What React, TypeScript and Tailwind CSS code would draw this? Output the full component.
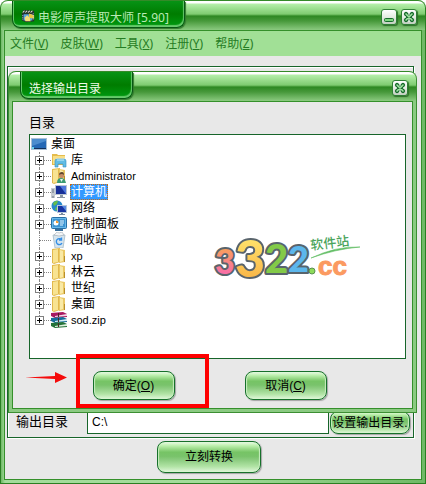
import type { ReactNode } from "react";

const cjk = "font-['Liberation_Sans','Noto_Sans_CJK_SC',sans-serif]";
const ui = "font-['Noto_Sans','Noto_Sans_CJK_SC',sans-serif]";

function CaptionButton({ kind, label }: { kind: "min" | "close"; label: string }) {
  return (
    <button
      type="button"
      aria-label={label}
      className="flex size-4 items-center justify-center rounded-[3px] border border-[#2f7f35] bg-linear-to-b from-white via-[#e4ece2] to-[#c3cfc0] shadow-[1px_1px_1px_#30702a]"
    >
      <svg viewBox="0 0 12 12" className="size-3 shrink-0" fill="none" stroke="#176b2c">
        {kind === "min" ? (
          <rect x="1.5" y="7.5" width="9" height="3" rx="1" fill="#7fd67f" />
        ) : (
          <>
            <path d="M3 3l6 6M9 3L3 9" strokeWidth="4.2" strokeLinecap="round" />
            <path d="M3 3l6 6M9 3L3 9" stroke="#a2e3a3" strokeWidth="1.6" strokeLinecap="round" />
            <path d="M6 1v3M6 8v3M1 6h2M9 6h2" stroke="#edf3ec" />
          </>
        )}
      </svg>
    </button>
  );
}

function TitleBar({ tab, children }: { tab: ReactNode; children: ReactNode }) {
  return (
    <header className="flex h-[30px] items-start justify-between rounded-t-[7px] border-t border-[#348a28] bg-[linear-gradient(180deg,#ffffff_0,#ffffff_2px,#b5efaa_3px,#7fcc71_13px,#5cae4e_14px,#2d8822_15px,#47993b_20px,#8bca80_29px)] pr-2 pl-[11px]">
      {tab}
      <div className="flex gap-1 pt-2">{children}</div>
    </header>
  );
}

function GlossButton({ className, children }: { className: string; children: ReactNode }) {
  return (
    <button
      type="button"
      className={`${cjk} flex items-center justify-center rounded-[8px] border border-[#17712b] bg-[linear-gradient(180deg,#ecfae8_0,#bdf0ae_12%,#76c465_34%,#79c36b_48%,#8ccc80_60%,#b2e4a6_82%,#e0f7da_100%)] text-xs whitespace-nowrap text-black shadow-[inset_1px_0_1px_#c9efc1,inset_-1px_0_1px_#c9efc1,1px_1px_1px_#a3a3a3] ${className}`}
    >
      {children}
    </button>
  );
}

function FilmIcon() {
  return (
    <svg viewBox="0 0 16 16" className="size-[14px] shrink-0">
      <path d="M1 5l2-4 12 1v12l-9 1-5-2z" fill="#25352c" />
      <path d="M2 4l2-2M5 4l2-2M8 4l2-2M11 4l2-2" stroke="#f1f1e6" strokeWidth="1.2" />
      <path d="M3 6h10v7H3z" fill="#57a5e0" />
      <path d="M9 5l6 2v4l-6-1z" fill="#eac642" />
      <path d="M4 10l3-3 3 3 1 4H5z" fill="#f5df7a" />
      <path d="M2 7v5M14 5v8" stroke="#bad7ef" strokeDasharray="1 1" />
    </svg>
  );
}

type Kind = "desktop" | "library" | "user" | "computer" | "network" | "control" | "bin" | "folder" | "zip";

function NodeIcon({ kind }: { kind: Kind }) {
  return (
    <svg viewBox="0 0 16 16" className="size-4 shrink-0">
      {kind === "desktop" && (
        <>
          <path d="M0 2h16v12H0z" fill="#a9bfd5" />
          <path d="M1 3h14v9H1z" fill="#2568b5" />
          <path d="M1 3h14v2L1 10z" fill="#4b8cce" />
          <path d="M1 12h14v1H1z" fill="#122f58" />
          <path d="M1 11h2v2H1z" fill="#65d1ef" />
        </>
      )}
      {kind === "library" && (
        <>
          <path d="M1 2h5l1 1h7v10H1z" fill="#e5bc4c" />
          <path d="M2 4h12v8H2z" fill="#f8df87" />
          <path d="M5 6h9v2H5z" fill="#fff5c5" />
          <path d="M4 15V9q0-2 2-2h7q2 0 2 2v6h-3v-3H7v3z" fill="#62bce4" stroke="#328fc3" strokeWidth=".6" />
          <path d="M6 8h7" stroke="#c7edfc" />
        </>
      )}
      {(kind === "folder" || kind === "user") && (
        <>
          <path d="M1 1l8-1v14l-6 2-2-1V2z" fill="#e2b84c" />
          <path d="M2 2l5-1v13l-5 1z" fill="#f8e391" />
          <path d="M8 1l6 1v12l-6 1z" fill="#eac864" />
          <path d="M9 2l3 1v10l-3 1z" fill="#f9e9a5" />
          <path d="M13.500 8v6" stroke="#b98f2a" />
        </>
      )}
      {kind === "user" && (
        <>
          <path d="M6 15q0-5 4-5t5 5z" fill="#3c9c73" />
          <path d="M9 11h3l-1.500 3z" fill="#e8f4ee" />
          <circle cx="10.500" cy="7.500" r="2.600" fill="#c58d65" />
          <path d="M8 7q0-3 3-3 2 0 2 3-2-2-5 0z" fill="#60452f" />
        </>
      )}
      {kind === "computer" && (
        <>
          <path d="M0 4h4v10H0z" fill="#c6cbd1" />
          <path d="M1 6h2M1 8h2M1 13h2" stroke="#687583" />
          <path d="M4 1h12v10H4z" fill="#b9c4d2" />
          <path d="M5 2h10v8H5z" fill="#172f98" />
          <path d="M9 2h6v8z" fill="#4f77dd" />
          <path d="M9 11h3v2h2v1H6v-1h3z" fill="#8a97a5" />
        </>
      )}
      {kind === "network" && (
        <>
          <circle cx="6" cy="6" r="5.500" fill="#2689cc" />
          <path d="M2 3q3-3 5-2L6 4 3 6zM5 7l4 1-2 3-3-1z" fill="#63bd4c" />
          <path d="M6 5h10v8H6z" fill="#b4c5da" />
          <path d="M7 6h8v6H7z" fill="#1934a3" />
          <path d="M11 6h4v5z" fill="#5689e0" />
          <path d="M10 13h2v1h2v1H8v-1h2z" fill="#7b8ba0" />
        </>
      )}
      {kind === "control" && (
        <>
          <rect x=".5" y="1.500" width="15" height="11" rx="1" fill="#68b8e9" stroke="#286fa6" />
          <path d="M2 3h12v8H2z" fill="#3c94d2" />
          <circle cx="5" cy="7" r="2.500" fill="#fff" />
          <path d="M5 7V4.500A2.500 2.500 0 0 1 7.500 7z" fill="#f39b31" />
          <path d="M9 5h4M9 7h4M9 9h3" stroke="#e6f5ff" />
          <path d="M4 14h8" stroke="#3b6f9a" strokeWidth="2" />
        </>
      )}
      {kind === "bin" && (
        <>
          <path d="M2 3h12l-2 13H4z" fill="#d5e4ed" stroke="#a5bac7" strokeWidth=".8" />
          <path d="M3 3l3-3 2 1 3-1 2 3-5 1z" fill="#f2f5f7" stroke="#a4adb4" strokeWidth=".6" />
          <path d="M10.500 7.500A3 3 0 1 0 11 11M10.500 5.500v2.500H8" fill="none" stroke="#348ee6" strokeWidth="1.400" />
        </>
      )}
      {kind === "zip" && (
        <>
          <path d="M0 1l12-1 4 2v3L4 6 0 4z" fill="#a81861" />
          <path d="M4 4l12-2v2L4 5z" fill="#f3d8e7" />
          <path d="M0 6l12-1 4 2v3L4 11 0 9z" fill="#156d9b" />
          <path d="M4 9l12-2v2L4 10z" fill="#d8eff5" />
          <path d="M0 11l12-1 4 2v3L4 16 0 14z" fill="#237238" />
          <path d="M4 14l12-2v2L4 15z" fill="#dff1df" />
          <path d="M7 1h1v4H7zM7 6h1v4H7zM7 11h1v4H7z" fill="#4b2a24" />
        </>
      )}
    </svg>
  );
}

const nodes: { label: string; kind: Kind; leaf?: boolean; selected?: boolean }[] = [
  { label: "库", kind: "library" },
  { label: "Administrator", kind: "user" },
  { label: "计算机", kind: "computer", selected: true },
  { label: "网络", kind: "network" },
  { label: "控制面板", kind: "control" },
  { label: "回收站", kind: "bin", leaf: true },
  { label: "xp", kind: "folder" },
  { label: "林云", kind: "folder" },
  { label: "世纪", kind: "folder" },
  { label: "桌面", kind: "folder" },
  { label: "sod.zip", kind: "zip" },
];

function DirectoryTree() {
  return (
    <ul aria-labelledby="tree-label" className={`${cjk} pt-px pl-px text-xs leading-4 text-black`}>
      <li>
        <div className="flex h-4 items-center gap-1">
          <NodeIcon kind="desktop" />
          <span>桌面</span>
        </div>
        <ul>
          {nodes.map((node, i) => (
            <li key={i} className="flex h-4 items-center pl-1">
              <span className="relative flex h-4 w-4 items-center">
                <span className={`absolute top-0 left-1 border-l border-dotted border-[#858585] ${i === nodes.length - 1 ? "h-2" : "h-4"}`} />
                <span className="absolute left-1 w-3 border-t border-dotted border-[#858585]" />
                {!node.leaf && (
                  <button type="button" aria-label={`展开 ${node.label}`} className="relative size-[9px] border border-[#808080] bg-white">
                    <svg viewBox="0 0 7 7" className="size-[7px]">
                      <path d="M1 3.500h5M3.500 1v5" stroke="#000" />
                    </svg>
                  </button>
                )}
              </span>
              <NodeIcon kind={node.kind} />
              <span
                className={`ml-[3px] h-4 px-px leading-4 ${/^[\x20-\x7e]+$/.test(node.label) ? "text-[11px]" : ""} ${node.selected ? "bg-[#3399ff] text-white outline-1 -outline-offset-1 outline-dotted outline-[#c86b12]" : ""}`}
              >
                {node.label}
              </span>
            </li>
          ))}
        </ul>
      </li>
    </ul>
  );
}

function Watermark() {
  return (
    <svg viewBox="0 0 160 75" className="pointer-events-none absolute top-[85px] left-[180px] h-[75px] w-[160px] overflow-visible" role="img" aria-label="3322.cc 软件站">
      <defs>
        <linearGradient id="pink" x1="0" y1="0" x2="0" y2="1">
          <stop offset="0.2" stopColor="#f9a15a" />
          <stop offset="0.8" stopColor="#f86fa5" />
        </linearGradient>
        <linearGradient id="gold" x1="0" y1="0" x2="0" y2="1">
          <stop offset="0.2" stopColor="#ffe36b" />
          <stop offset="0.8" stopColor="#f9b94b" />
        </linearGradient>
      </defs>
      <g className="font-['Lato','Liberation_Sans',sans-serif] font-black" strokeLinejoin="round" paintOrder="stroke" stroke="#59646c" strokeWidth="4">
        <text x="78" y="52" fontSize="36" fill="#5cb7ec">2</text>
        <text x="5" y="54" fontSize="34" fill="url(#pink)">3</text>
        <text x="55" y="53" fontSize="40" fill="#83ca48">2</text>
        <text x="25" y="57" fontSize="52" fill="url(#gold)">3</text>
      </g>
      <circle cx="102" cy="51" r="3" fill="#8ddb5a" stroke="#5a8f50" />
      <text x="108" y="55" fontSize="26" fill="#fb9a61" stroke="#fb9a61" className="font-['Liberation_Sans',sans-serif] font-bold">cc</text>
      <text x="101" y="30" fontSize="13" fill="#4aa45b" transform="rotate(-7 101 30)" className="font-['Noto_Sans_CJK_SC',sans-serif] font-medium">软件站</text>
      <path d="M101 38Q126 26 150 27 126 29 101 38z" fill="#62bd64" stroke="#62bd64" strokeWidth=".6" />
    </svg>
  );
}

function OutputDialog() {
  return (
    <section role="dialog" aria-labelledby="dialog-title" className="absolute top-[71px] right-2 left-[7px] overflow-hidden rounded-t-[8px] border-x border-b border-[#3c8f32] bg-[#8bca82]">
      <TitleBar
        tab={
          <div className="flex h-[27px] w-[113px] items-center rounded-b-[8px] border-x border-b border-[#075714] bg-linear-to-b from-[#079315] via-[#007c00] to-[#009b12] pl-2 shadow-[inset_-1px_-2px_1px_#67c96c,inset_1px_0_0_#67c96c,1px_1px_1px_#347a2e]">
            <h2 id="dialog-title" className={`${ui} pt-2 text-xs leading-4 text-[#effbe9]`}>选择输出目录</h2>
          </div>
        }
      >
        <CaptionButton kind="close" label="关闭" />
      </TitleBar>
      <div className="mx-[3px] mb-[3px] border border-[#35902b] bg-[#e8e8e8] pt-[13px] pr-[6px] pb-2 pl-4">
        <h3 id="tree-label" className={`${cjk} text-[13px] leading-4 text-black`}>目录</h3>
        <div className="relative mt-[3px] h-[225px] border border-[#17652a] bg-white">
          <DirectoryTree />
          <Watermark />
        </div>
        <div className="relative mt-3 flex justify-center gap-[70px] pr-4">
          <svg viewBox="0 0 44 14" className="absolute top-0 -left-1 h-[14px] w-[44px]" aria-hidden="true">
            <path d="M0 6.500L30 5V1l12 5.500L30 12V8z" fill="#f50b0b" />
          </svg>
          <div className="relative">
            <GlossButton className="h-[29px] w-[82px]">确定(<u>O</u>)</GlossButton>
            <span className="pointer-events-none absolute -top-[17px] -right-[34px] -bottom-2 -left-[17px] border-4 border-[#fe0000]" />
          </div>
          <GlossButton className="h-[29px] w-[82px]">取消(<u>C</u>)</GlossButton>
        </div>
      </div>
    </section>
  );
}

const menus = [
  { label: "文件", hot: "V" },
  { label: "皮肤", hot: "W" },
  { label: "工具", hot: "X" },
  { label: "注册", hot: "Y" },
  { label: "帮助", hot: "Z" },
];

export default function App() {
  return (
    <main className="relative flex min-h-screen flex-col overflow-hidden rounded-t-[8px] border-x border-b border-[#2a7f22] bg-[linear-gradient(90deg,#6fb966_0,#a3dc9b_4px,#a3dc9b_50%,#6fb966_100%)]">
      <TitleBar
        tab={
          <div className="flex h-[27px] w-[173px] items-center gap-[3px] rounded-b-[8px] border-x border-b border-[#075714] bg-linear-to-b from-[#079315] via-[#007c00] to-[#009b12] pl-2 shadow-[inset_-1px_-2px_1px_#67c96c,inset_1px_0_0_#67c96c,1px_1px_1px_#347a2e]">
            <span className="pt-1"><FilmIcon /></span>
            <h1 className={`${ui} pt-2 text-xs leading-4 whitespace-nowrap text-[#b9eab5]`}>电影原声提取大师 [5.90]</h1>
          </div>
        }
      >
        <CaptionButton kind="min" label="最小化" />
        <CaptionButton kind="close" label="关闭" />
      </TitleBar>
      <div className="mx-[3px] mb-[3px] flex flex-1 flex-col border border-[#35902b] bg-[#e8e8e8]">
        <nav className="flex h-[25px] items-center gap-3 bg-[#a1e096] pt-px pl-[5px]">
          {menus.map((m) => (
            <button key={m.hot} type="button" className={`${ui} text-xs leading-4 whitespace-nowrap text-[#267c24]`}>
              {m.label}(<u>{m.hot}</u>)
            </button>
          ))}
        </nav>
        <div className="mt-[10px] mr-[7px] ml-[2px] flex flex-1 flex-col justify-end border border-[#17652a] pr-[3px] pb-[3px] pl-2 shadow-[1px_1px_0_#fff,inset_1px_1px_0_#fff]">
          <div className="flex items-end">
            <label htmlFor="out-dir" className={`${cjk} w-[71px] pb-1 text-[13px] leading-4 text-black`}>输出目录</label>
            <input
              id="out-dir"
              type="text"
              defaultValue={"C:\\"}
              className={`${cjk} h-6 min-w-0 flex-1 border border-[#17652a] bg-white px-1 text-xs text-black`}
            />
            <GlossButton className="ml-px h-[23px] w-[80px]">设置输出目录.</GlossButton>
          </div>
        </div>
        <footer className="flex justify-center pt-[3px] pr-2 pb-[6px]">
          <GlossButton className="h-8 w-[104px]">立刻转换</GlossButton>
        </footer>
      </div>
      <OutputDialog />
    </main>
  );
}
